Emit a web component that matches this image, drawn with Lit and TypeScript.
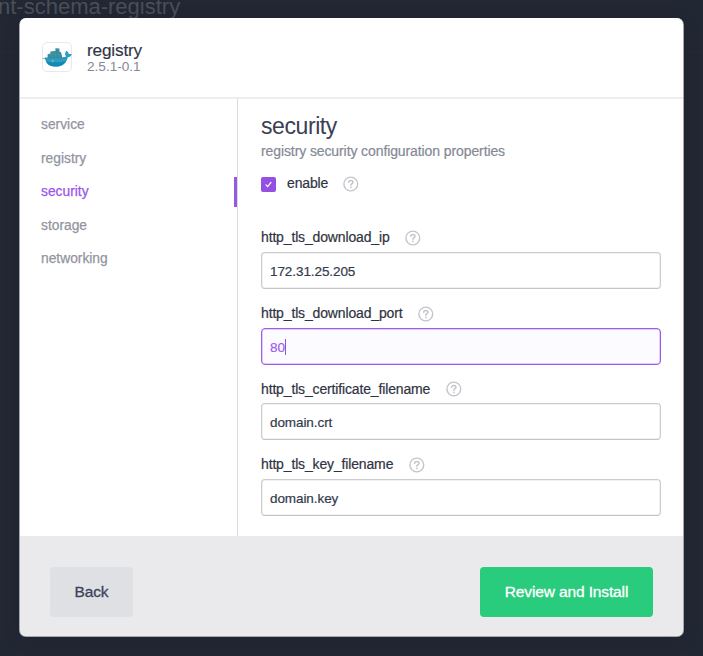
import { LitElement, html, css, svg } from "lit";
import { customElement, property } from "lit/decorators.js";
import { classMap } from "lit/directives/class-map.js";

@customElement("help-icon")
class HelpIcon extends LitElement {
  static styles = css`
    :host { display: block; width: 16px; height: 16px; flex: none; }
    .icon { display: block; }
  `;
  render() {
    return html`<svg class="icon" width="16" height="16" viewBox="0 0 16 16" fill="none" stroke="#c3c5cb" stroke-linecap="round" stroke-linejoin="round">
      <circle cx="7.8" cy="8" r="6.9" stroke-width="1.4" />
      <path d="M5.7 6.3C5.7 5.1 6.6 4.4 7.8 4.4C9.1 4.4 10 5.1 10 6.2C10 7.6 7.9 7.6 7.9 9.2" stroke-width="1.5" />
      <path d="M7.9 11.4V11.5" stroke-width="1.7" />
    </svg>`;
  }
}

@customElement("config-field")
class ConfigField extends LitElement {
  @property() label = "";
  @property() value = "";
  @property({ type: Boolean }) active = false;

  static styles = css`
    :host { display: block; }
    .label { display: flex; align-items: center; gap: 15.5px; height: 16px; color: #30333f; font-size: 14px; letter-spacing: -0.15px; line-height: 16px; white-space: nowrap; }
    .text { padding-bottom: 1.4px; -webkit-text-stroke: 0.2px currentColor; }
    .box { box-sizing: border-box; display: flex; align-items: center; height: 37px; margin-top: 6px; padding: 2px 8px 0; border: 1px solid #cbccce; border-bottom-color: #c3c4c7; border-radius: 4px; box-shadow: inset 0 0 0 0.5px #e4e4e6; color: #343a4c; font-size: 13.5px; letter-spacing: -0.08px; -webkit-text-stroke: 0.2px currentColor; background: #fff; }
    .box.active { border-color: #9d5bea; box-shadow: inset 0 0 0 0.5px #c79df5; background: #fcfbff; color: #9f5cf0; }
    .caret { width: 1px; height: 16px; margin-left: 0.5px; background: #9351e5; }
  `;
  render() {
    return html`
      <div class="label"><span class="text">${this.label}</span><help-icon></help-icon></div>
      <div class=${classMap({ box: true, active: this.active })}>
        <span>${this.value}</span>${this.active ? html`<span class="caret"></span>` : ""}
      </div>`;
  }
}

const whale = svg`
  <path d="M2.6 15.6C8 15.2 21.6 15.8 24 14.4C22.6 12.6 22.9 10.4 24.4 8.8C26 9.8 26.7 11 26.8 12.2C27.8 11.8 28.9 11.9 29.8 12.3C29.1 14.2 27.7 15.2 25.8 15.2C24.6 21 20.4 24.6 13.8 24.6C7.4 24.6 3.8 21.2 3 16.6Z" fill="#2a9fc6"/>
  <path d="M4 19.2C9 21 20 20.4 24.2 19C22 22.9 18.4 24.6 13.8 24.6C8.4 24.6 5.2 22.5 4 19.2Z" fill="#1688b2"/>
  <path d="M5.6 16V12.2L8.4 11.6V9.4L13.4 9V6.2L17.4 6.6V9.4L19 10.2L20.4 16Z" fill="#358c9d"/>
  <path d="M6 12.6H19.6M10.6 9.8V15.6M13.6 9.4V15.6M16.8 9.8V15.6M8.2 12.4V15.6" stroke="#4f9fae" stroke-width=".4"/>
  <path d="M.6 16.5H4L6 16.9L9 16.4L12 16.9L15 16.4L18 16.9L21 16.4L25 16.5" fill="none" stroke="#4a8796" stroke-width=".6"/>
  <circle cx="10.8" cy="18.9" r=".6" fill="#d6f1f6"/>
`;

@customElement("app-root")
class AppRoot extends LitElement {
  static styles = css`
    :host { display: block; position: relative; width: 703px; height: 656px; overflow: hidden; background: #222734; font-family: "Liberation Sans", Arial, sans-serif; }
    .backdrop-title { position: absolute; top: -6px; left: -2px; font-size: 22px; line-height: 25px; color: #4a4e59; white-space: nowrap; }
    .backdrop-line { position: absolute; left: 0; right: 0; top: 51px; height: 1px; background: #272a36; }
    .modal { position: absolute; left: 20px; top: 18px; width: 663px; height: 618px; display: flex; flex-direction: column; border-radius: 6px; overflow: hidden; background: #fff; }
    .shade { position: absolute; left: 19px; top: 18px; width: 665px; height: 619px; border-radius: 7px; background: #a5a7ad; box-shadow: 0 3px 14px rgba(30, 32, 46, 0.35); }
    .header { box-sizing: border-box; display: flex; align-items: center; gap: 15px; height: 81px; padding: 0 22px 2px; border-bottom: 2px solid #eeeeef; flex: none; }
    .heading { padding-top: 1px; }
    .logo { box-sizing: border-box; width: 30px; height: 30px; border: 1px solid #e9e9eb; border-radius: 5px; flex: none; display: flex; align-items: center; justify-content: center; }
    .logo svg { flex: none; display: block; overflow: visible; }
    .name { color: #303548; font-size: 17.2px; letter-spacing: -0.17px; line-height: 18px; -webkit-text-stroke: 0.15px currentColor; }
    .version { color: #858996; font-size: 13.6px; line-height: 15px; }
    .body { display: flex; flex: 1; min-height: 0; }
    .nav { box-sizing: border-box; width: 218px; padding-top: 9.5px; border-right: 1px solid #d9dadd; flex: none; }
    .item { display: flex; align-items: center; justify-content: space-between; height: 33.5px; padding-left: 21px; color: #92959f; font-size: 13.8px; -webkit-text-stroke: 0.25px currentColor; }
    .item-text { padding-bottom: 1px; }
    .item.active { color: #9b55ea; }
    .marker { width: 3px; height: 30px; background: #9858e2; }
    .content { flex: 1; padding: 14px 22px 0 23px; }
    .title { color: #3a4052; font-size: 23px; letter-spacing: -0.42px; line-height: 26px; }
    .desc { color: #858995; font-size: 14px; letter-spacing: -0.1px; line-height: 16px; margin-top: 4px; white-space: nowrap; -webkit-text-stroke: 0.2px currentColor; }
    .enable { display: flex; align-items: center; height: 16px; margin-top: 17px; color: #30333f; font-size: 14px; letter-spacing: -0.15px; }
    .check { width: 15px; height: 15px; border-radius: 2px; background: #9350e3; margin-right: 11px; }
    .check svg { display: block; }
    .enable-text { margin-right: 15px; padding-bottom: 2px; -webkit-text-stroke: 0.2px currentColor; }
    .fields { display: flex; flex-direction: column; gap: 16.6px; margin-top: 38px; }
    .footer { box-sizing: border-box; display: flex; align-items: center; justify-content: space-between; height: 100px; padding: 12px 30px 0; background: #eaeaec; flex: none; }
    .button { display: flex; align-items: center; justify-content: center; height: 50px; border-radius: 4px; font-size: 15.5px; letter-spacing: -0.13px; -webkit-text-stroke: 0.3px currentColor; margin-bottom: 1px; }
    .back { width: 83px; background: #dee0e4; color: #3c4358; }
    .install { width: 173px; background: #29cb7c; color: #fff; }
  `;

  private sections = ["service", "registry", "security", "storage", "networking"];
  private fields = [
    { label: "http_tls_download_ip", value: "172.31.25.205" },
    { label: "http_tls_download_port", value: "80", active: true },
    { label: "http_tls_certificate_filename", value: "domain.crt" },
    { label: "http_tls_key_filename", value: "domain.key" },
  ];

  render() {
    return html`
      <div class="backdrop-title">nt-schema-registry</div>
      <div class="backdrop-line"></div>
      <div class="shade"></div>
      <div class="modal">
        <div class="header">
          <div class="logo"><svg width="30" height="30" viewBox="0 0 30 30">${whale}</svg></div>
          <div class="heading">
            <div class="name">registry</div>
            <div class="version">2.5.1-0.1</div>
          </div>
        </div>
        <div class="body">
          <div class="nav">
            ${this.sections.map((s) => html`<div class=${classMap({ item: true, active: s === "security" })}>
              <span class="item-text">${s}</span>${s === "security" ? html`<span class="marker"></span>` : ""}
            </div>`)}
          </div>
          <div class="content">
            <div class="title">security</div>
            <div class="desc">registry security configuration properties</div>
            <div class="enable">
              <span class="check"><svg width="15" height="15" viewBox="0 0 15 15"><path d="M5 7.9L6.7 9.6L10 5.4" fill="none" stroke="#fff" stroke-width="1.3" stroke-linecap="round"/></svg></span>
              <span class="enable-text">enable</span>
              <help-icon></help-icon>
            </div>
            <div class="fields">
              ${this.fields.map((f) => html`<config-field .label=${f.label} .value=${f.value} .active=${!!f.active}></config-field>`)}
            </div>
          </div>
        </div>
        <div class="footer">
          <div class="button back">Back</div>
          <div class="button install">Review and Install</div>
        </div>
      </div>`;
  }
}
